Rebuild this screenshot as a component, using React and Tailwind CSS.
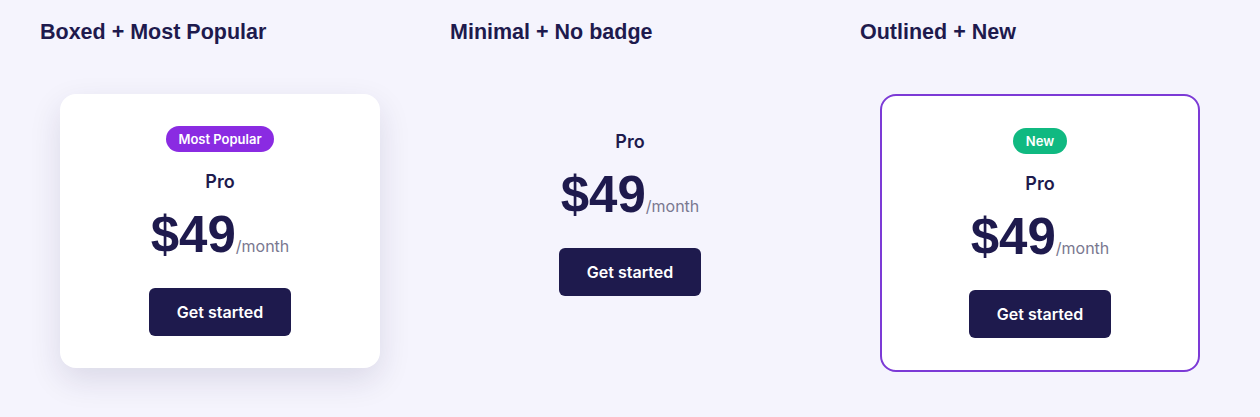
import React from "react";

const plans = [
  { title: "Boxed + Most Popular", variant: "boxed", badge: "Most Popular" },
  { title: "Minimal + No badge", variant: "minimal", badge: null },
  { title: "Outlined + New", variant: "outlined", badge: "New" },
];

const PricingCard = ({ variant, badge }) => {
  let cardClass = "w-80 rounded-2xl p-8 flex flex-col items-center";
  if (variant === "boxed") {
    cardClass += " bg-white shadow-[0_12px_32px_rgba(30,26,77,0.12)]";
  } else if (variant === "outlined") {
    cardClass += " bg-white border-2 border-[#7c3ad6]";
  } else {
    cardClass += " border-2 border-transparent";
  }

  return (
    <div className={cardClass}>
      {badge && (
        <span
          className={
            badge === "New"
              ? "mb-4 rounded-full bg-[#10b981] px-[13px] py-1 text-[13px] leading-[18px] font-semibold text-white"
              : "mb-4 rounded-full bg-[#8a2be2] px-3 py-1 text-[13px] leading-[18px] font-semibold text-white"
          }
        >
          {badge}
        </span>
      )}
      <h3 className="text-lg leading-7 font-semibold text-[#1e1a4d]">Pro</h3>
      <div className="mt-[13px] flex items-baseline">
        <span className="font-['Liberation_Sans',Arial,sans-serif] text-[51px] leading-none font-bold text-[#1e1a4d]">
          $49
        </span>
        <span className="text-base text-[#7a7890]">/month</span>
      </div>
      <button className="mt-[28px] rounded-md bg-[#1e1a4d] px-7 py-3 text-base leading-6 font-semibold text-white">
        Get started
      </button>
    </div>
  );
};

export default function App() {
  return (
    <div className="min-h-[417px] bg-[#f5f4fd] px-10 pt-[18px] font-['Inter',sans-serif]">
      <div className="flex gap-[50px]">
        {plans.map((plan) => (
          <section key={plan.title} className="w-[360px]">
            <h2 className="mb-12 font-['Liberation_Sans',Arial,sans-serif] text-[21.5px] leading-7 font-bold text-[#1e1a4d]">
              {plan.title}
            </h2>
            <div className="px-5">
              <PricingCard variant={plan.variant} badge={plan.badge} />
            </div>
          </section>
        ))}
      </div>
    </div>
  );
}
